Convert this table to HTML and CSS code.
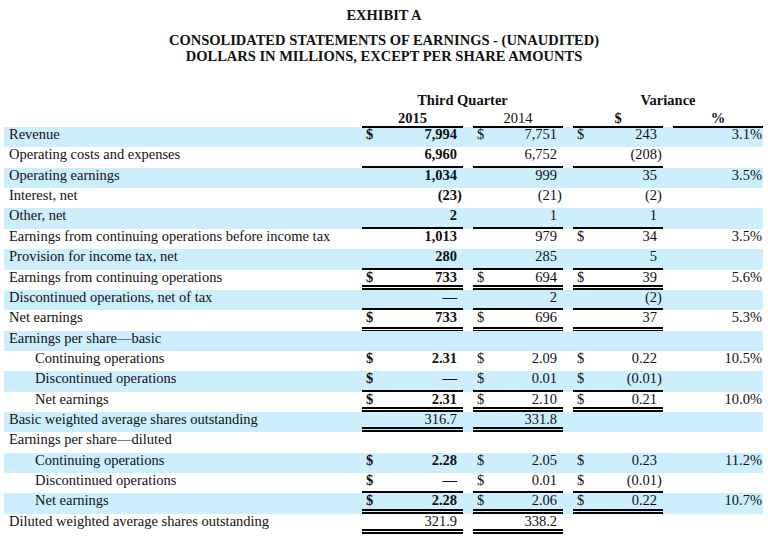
FILE: index.html
```html
<!DOCTYPE html>
<html>
<head>
<meta charset="utf-8">
<link rel="stylesheet" href="styles.css">
</head>
<body>
<div class="titles">
  <div class="t1">EXHIBIT A</div>
  <div class="t2">CONSOLIDATED STATEMENTS OF EARNINGS - (UNAUDITED)</div>
  <div class="t3">DOLLARS IN MILLIONS, EXCEPT PER SHARE AMOUNTS</div>
</div>
<div class="table">
  <div class="row head1">
    <div class="lbl"></div>
    <div class="span2 b">Third Quarter</div>
    <div class="gap"></div>
    <div class="span2v b">Variance</div>
  </div>
  <div class="row head2">
    <div class="lbl"></div>
    <div class="c1 hc b u">2015</div><div class="gap"></div>
    <div class="c2 hc u">2014</div><div class="gap"></div>
    <div class="c3 hc b u">$</div><div class="gap"></div>
    <div class="c4 hc b u">%</div>
  </div>

  <div class="row blue">
    <div class="lbl">Revenue</div>
    <div class="v b"><span>$</span><span>7,994</span></div><div class="gap"></div>
    <div class="v"><span>$</span><span>7,751</span></div><div class="gap"></div>
    <div class="v"><span>$</span><span>243</span></div><div class="gap"></div>
    <div class="p">3.1%</div>
  </div>
  <div class="row">
    <div class="lbl">Operating costs and expenses</div>
    <div class="v b u"><span></span><span>6,960</span></div><div class="gap"></div>
    <div class="v u"><span></span><span>6,752</span></div><div class="gap"></div>
    <div class="v u"><span></span><span class="neg">(208)</span></div><div class="gap"></div>
    <div class="p"></div>
  </div>
  <div class="row blue">
    <div class="lbl">Operating earnings</div>
    <div class="v b"><span></span><span>1,034</span></div><div class="gap"></div>
    <div class="v"><span></span><span>999</span></div><div class="gap"></div>
    <div class="v"><span></span><span>35</span></div><div class="gap"></div>
    <div class="p">3.5%</div>
  </div>
  <div class="row">
    <div class="lbl">Interest, net</div>
    <div class="v b"><span></span><span class="neg">(23)</span></div><div class="gap"></div>
    <div class="v"><span></span><span class="neg">(21)</span></div><div class="gap"></div>
    <div class="v"><span></span><span class="neg">(2)</span></div><div class="gap"></div>
    <div class="p"></div>
  </div>
  <div class="row blue">
    <div class="lbl">Other, net</div>
    <div class="v b u"><span></span><span>2</span></div><div class="gap"></div>
    <div class="v u"><span></span><span>1</span></div><div class="gap"></div>
    <div class="v u"><span></span><span>1</span></div><div class="gap"></div>
    <div class="p"></div>
  </div>
  <div class="row">
    <div class="lbl">Earnings from continuing operations before income tax</div>
    <div class="v b"><span></span><span>1,013</span></div><div class="gap"></div>
    <div class="v"><span></span><span>979</span></div><div class="gap"></div>
    <div class="v"><span>$</span><span>34</span></div><div class="gap"></div>
    <div class="p">3.5%</div>
  </div>
  <div class="row blue">
    <div class="lbl">Provision for income tax, net</div>
    <div class="v b u"><span></span><span>280</span></div><div class="gap"></div>
    <div class="v u"><span></span><span>285</span></div><div class="gap"></div>
    <div class="v u"><span></span><span>5</span></div><div class="gap"></div>
    <div class="p"></div>
  </div>
  <div class="row">
    <div class="lbl">Earnings from continuing operations</div>
    <div class="v b uu"><span>$</span><span>733</span></div><div class="gap"></div>
    <div class="v uu"><span>$</span><span>694</span></div><div class="gap"></div>
    <div class="v uu"><span>$</span><span>39</span></div><div class="gap"></div>
    <div class="p">5.6%</div>
  </div>
  <div class="row blue">
    <div class="lbl">Discontinued operations, net of tax</div>
    <div class="v b u"><span></span><span>—</span></div><div class="gap"></div>
    <div class="v u"><span></span><span>2</span></div><div class="gap"></div>
    <div class="v u"><span></span><span class="neg">(2)</span></div><div class="gap"></div>
    <div class="p"></div>
  </div>
  <div class="row">
    <div class="lbl">Net earnings</div>
    <div class="v b uu"><span>$</span><span>733</span></div><div class="gap"></div>
    <div class="v uu"><span>$</span><span>696</span></div><div class="gap"></div>
    <div class="v uu"><span></span><span>37</span></div><div class="gap"></div>
    <div class="p">5.3%</div>
  </div>
  <div class="row blue">
    <div class="lbl">Earnings per share—basic</div>
    <div class="v"></div><div class="gap"></div>
    <div class="v"></div><div class="gap"></div>
    <div class="v"></div><div class="gap"></div>
    <div class="p"></div>
  </div>
  <div class="row">
    <div class="lbl ind">Continuing operations</div>
    <div class="v b"><span>$</span><span>2.31</span></div><div class="gap"></div>
    <div class="v"><span>$</span><span>2.09</span></div><div class="gap"></div>
    <div class="v"><span>$</span><span>0.22</span></div><div class="gap"></div>
    <div class="p">10.5%</div>
  </div>
  <div class="row blue">
    <div class="lbl ind">Discontinued operations</div>
    <div class="v b u"><span>$</span><span>—</span></div><div class="gap"></div>
    <div class="v u"><span>$</span><span>0.01</span></div><div class="gap"></div>
    <div class="v u"><span>$</span><span class="neg">(0.01)</span></div><div class="gap"></div>
    <div class="p"></div>
  </div>
  <div class="row">
    <div class="lbl ind">Net earnings</div>
    <div class="v b uu"><span>$</span><span>2.31</span></div><div class="gap"></div>
    <div class="v uu"><span>$</span><span>2.10</span></div><div class="gap"></div>
    <div class="v uu"><span>$</span><span>0.21</span></div><div class="gap"></div>
    <div class="p">10.0%</div>
  </div>
  <div class="row blue">
    <div class="lbl">Basic weighted average shares outstanding</div>
    <div class="v uu"><span></span><span>316.7</span></div><div class="gap"></div>
    <div class="v uu"><span></span><span>331.8</span></div><div class="gap"></div>
    <div class="v"></div><div class="gap"></div>
    <div class="p"></div>
  </div>
  <div class="row">
    <div class="lbl">Earnings per share—diluted</div>
    <div class="v"></div><div class="gap"></div>
    <div class="v"></div><div class="gap"></div>
    <div class="v"></div><div class="gap"></div>
    <div class="p"></div>
  </div>
  <div class="row blue">
    <div class="lbl ind">Continuing operations</div>
    <div class="v b"><span>$</span><span>2.28</span></div><div class="gap"></div>
    <div class="v"><span>$</span><span>2.05</span></div><div class="gap"></div>
    <div class="v"><span>$</span><span>0.23</span></div><div class="gap"></div>
    <div class="p">11.2%</div>
  </div>
  <div class="row">
    <div class="lbl ind">Discontinued operations</div>
    <div class="v b u"><span>$</span><span>—</span></div><div class="gap"></div>
    <div class="v u"><span>$</span><span>0.01</span></div><div class="gap"></div>
    <div class="v u"><span>$</span><span class="neg">(0.01)</span></div><div class="gap"></div>
    <div class="p"></div>
  </div>
  <div class="row blue">
    <div class="lbl ind">Net earnings</div>
    <div class="v b uu"><span>$</span><span>2.28</span></div><div class="gap"></div>
    <div class="v uu"><span>$</span><span>2.06</span></div><div class="gap"></div>
    <div class="v uu"><span>$</span><span>0.22</span></div><div class="gap"></div>
    <div class="p">10.7%</div>
  </div>
  <div class="row">
    <div class="lbl">Diluted weighted average shares outstanding</div>
    <div class="v uu"><span></span><span>321.9</span></div><div class="gap"></div>
    <div class="v uu"><span></span><span>338.2</span></div><div class="gap"></div>
    <div class="v"></div><div class="gap"></div>
    <div class="p"></div>
  </div>
</div>
</body>
</html>
```

FILE: styles.css
```css
html, body {
  margin: 0;
  padding: 0;
  background: #ffffff;
}
body {
  font-family: "Liberation Serif", "Times New Roman", serif;
  font-size: 14.5px;
  color: #111111;
  padding: 0 4px;
}
.titles {
  text-align: center;
  font-weight: bold;
  padding-top: 7px;
  line-height: 16px;
}
.t2 {
  margin-top: 9px;
}
.table {
  margin-top: 28px;
  width: 759px;
}
.row {
  display: grid;
  grid-template-columns: 358px 101px 10px 90px 10px 90px 10px 90px;
  height: 20.37px;
  line-height: 14px;
}
.row > div {
  box-sizing: border-box;
  display: flex;
  align-items: flex-start;
}
.head1 {
  height: 16px;
  line-height: 16px;
  grid-template-columns: 358px 201px 10px 190px;
}
.head2 {
  height: 19px;
  line-height: 16px;
}
.head2 > div {
  padding-top: 2px;
}
.span2, .span2v {
  justify-content: center;
}
.hc {
  justify-content: center;
}
.blue {
  background: #cceefd;
}
.lbl {
  padding-left: 5px;
}
.lbl.ind {
  padding-left: 31px;
}
.v {
  justify-content: space-between;
  padding: 0 6px 0 4px;
}
.p {
  justify-content: flex-end;
  padding-right: 1px;
}
.b {
  font-weight: bold;
}
.u {
  border-bottom: 2px solid #000000;
}
.uu {
  background-image: linear-gradient(to top,
    #000000 0, #000000 1.5px,
    transparent 1.5px, transparent 2.5px,
    #000000 2.5px, #000000 4.5px,
    transparent 4.5px);
}
.neg {
  margin-right: -0.333em;
}
```
